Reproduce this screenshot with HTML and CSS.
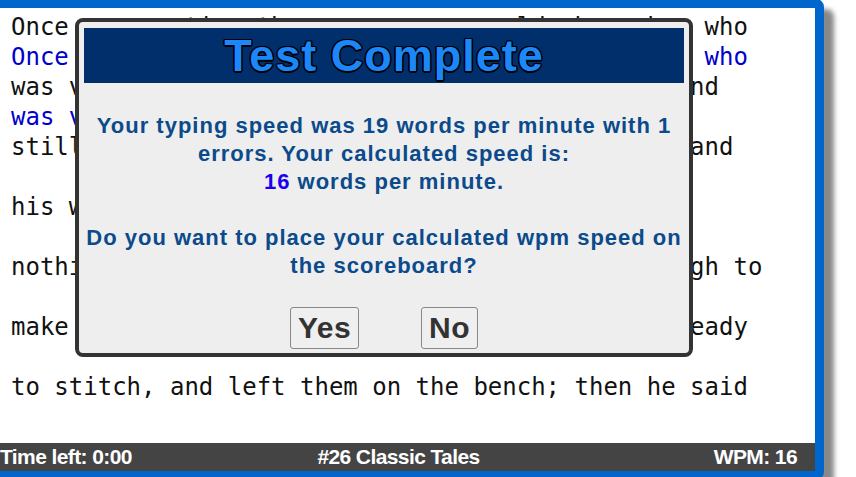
FILE: index.html
```html
<!DOCTYPE html>
<html>
<head>
	<title>Typing Test</title>
	<meta charset="utf-8">
	<link rel="stylesheet" href="styles.css">
</head>
<body>
	<div class="frame">
		<div class="passage">
			<div class="line">Once upon a time there was a poor old shoemaker who</div>
			<div class="line typed">Once upon a time there was a poor old shoemaker who</div>
			<div class="line">was very poor, though he worked hard all day, and</div>
			<div class="line typed">was very poor, thuogh he worked hard all</div>
			<div class="line">still he could not earn enough to feed himself and</div>
			<div class="line typed"></div>
			<div class="line">his wife were so poor that they had</div>
			<div class="line typed"></div>
			<div class="line">nothing left in the world but some leather enough to</div>
			<div class="line typed"></div>
			<div class="line">make one pair of shoes. He then cut them out, ready</div>
			<div class="line typed"></div>
			<div class="line">to stitch, and left them on the bench; then he said</div>
			<div class="line typed"></div>
		</div>
		<div class="status">
			<span class="left">Time left: 0:00</span>
			<span class="mid">#26 Classic Tales</span>
			<span class="right">WPM: 16</span>
		</div>
	</div>

	<div class="dialog">
		<div class="dialog-head">Test Complete</div>
		<div class="dialog-msg">
			Your typing speed was 19 words per minute with 1<br>
			errors. Your calculated speed is:<br>
			<span class="score">16</span> words per minute.<br>
			<br>
			Do you want to place your calculated wpm speed on<br>
			the scoreboard?
		</div>
		<div class="dialog-btns">
			<button class="btn">Yes</button>
			<button class="btn">No</button>
		</div>
	</div>
</body>
</html>
```

FILE: styles.css
```css
*{
	margin:0;
	padding:0;
}
body{
	background:#fff;
	overflow:hidden;
}
.frame{
	width:827px;
	margin:-1px 0 0 -21px;
	border:9px solid #0066cc;
	border-radius:8px;
	box-shadow:10px 10px 5px #888;
	background:#fff;
}
.passage{
	height:435px;
	box-sizing:border-box;
	padding:4px 0 0 23px;
	overflow:hidden;
	font-family:"DejaVu Sans Mono", monospace;
	font-size:24px;
	color:#111;
}
.line{
	height:30px;
	line-height:30px;
	white-space:pre;
}
.typed{
	color:#0000cc;
}
.status{
	display:grid;
	grid-template-columns:1fr auto 1fr;
	height:28px;
	line-height:28px;
	padding:0 18px 0 12px;
	background:#444;
	color:#fff;
	font-family:"Liberation Sans", Arial, sans-serif;
	font-weight:bold;
	font-size:21px;
	letter-spacing:-0.6px;
}
.status .mid{
	text-align:center;
}
.status .right{
	text-align:right;
}

.dialog{
	position:absolute;
	left:75px;
	top:18px;
	width:618px;
	box-sizing:border-box;
	padding:6px 5px 4px;
	border:4px solid #333;
	border-radius:8px;
	background:#eee;
	font-family:"Liberation Sans", Arial, sans-serif;
	font-weight:bold;
	text-align:center;
}
.dialog-head{
	height:55px;
	line-height:55px;
	background:#002f6c;
	color:#1b87f8;
	font-size:45px;
	letter-spacing:1px;
	text-shadow:1px 1px 0 #000, -1px -1px 0 #000, 1px -1px 0 #000, -1px 1px 0 #000,
		0 1.5px 0 #000, 0 -1.5px 0 #000, 1.5px 0 0 #000, -1.5px 0 0 #000;
}
.dialog-msg{
	margin-top:29px;
	font-size:22px;
	line-height:28px;
	letter-spacing:1px;
	color:#0b4a8b;
}
.score{
	color:#1a00f0;
}
.dialog-btns{
	display:flex;
	justify-content:center;
	gap:62px;
	margin-top:27px;
}
.btn{
	height:42px;
	padding:0 7px;
	border:1px solid #888;
	border-radius:3px;
	background:#efefef;
	color:#333;
	font-family:"Liberation Sans", Arial, sans-serif;
	font-weight:bold;
	font-size:30px;
	letter-spacing:0.5px;
}
```
